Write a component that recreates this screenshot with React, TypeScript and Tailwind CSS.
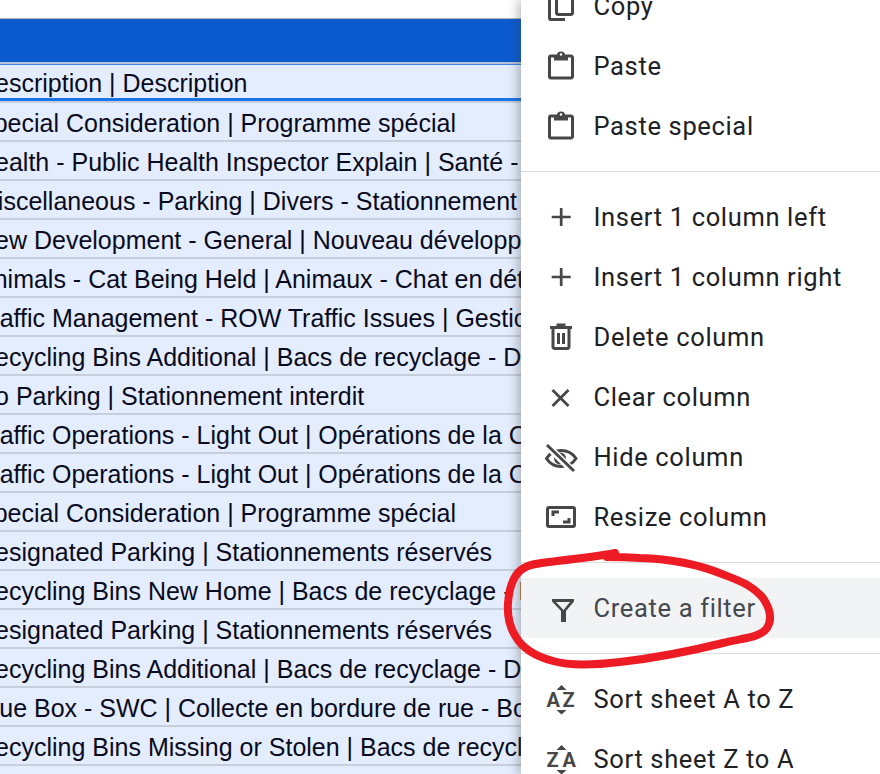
import React from 'react';

const ROWS = [
  'Special Consideration | Programme spécial',
  'Health - Public Health Inspector Explain | Santé - Inspecteur de la santé',
  'Miscellaneous - Parking | Divers - Stationnement illégal',
  'New Development - General | Nouveau développement',
  'Animals - Cat Being Held | Animaux - Chat en détention',
  'Traffic Management - ROW Traffic Issues | Gestion de la circulation',
  'Recycling Bins Additional | Bacs de recyclage - Demande',
  'No Parking | Stationnement interdit',
  'Traffic Operations - Light Out | Opérations de la Circulation',
  'Traffic Operations - Light Out | Opérations de la Circulation',
  'Special Consideration | Programme spécial',
  'Designated Parking | Stationnements réservés',
  'Recycling Bins New Home | Bacs de recyclage - Nouveau',
  'Designated Parking | Stationnements réservés',
  'Recycling Bins Additional | Bacs de recyclage - Demande',
  'Blue Box - SWC | Collecte en bordure de rue - Boîte bleue',
  'Recycling Bins Missing or Stolen | Bacs de recyclage manquants',
  '',
];

const Svg = ({ children }: { children: React.ReactNode }) => (
  <svg width="36" height="36" viewBox="0 0 36 36" fill="none" stroke="#474747" strokeWidth="3">
    {children}
  </svg>
);

const CopyIcon = () => (
  <Svg>
    <path d="M15 3h13a1.500 1.500 0 0 1 1.500 1.500V25a1.500 1.500 0 0 1-1.500 1.500H15a1.500 1.500 0 0 1-1.500-1.500V4.500A1.500 1.500 0 0 1 15 3Z" />
    <path d="M6.500 8v22a1.500 1.500 0 0 0 1.500 1.500h14" />
  </Svg>
);

const PasteIcon = () => (
  <Svg>
    <path d="M8 8h20a1.500 1.500 0 0 1 1.500 1.500v19A1.500 1.500 0 0 1 28 30H8a1.500 1.500 0 0 1-1.500-1.500v-19A1.500 1.500 0 0 1 8 8Z" />
    <path d="M11 7h14v5.500H11z" fill="#474747" stroke="none" />
    <path d="M14 7a4 3.500 0 0 1 8 0z" fill="#474747" stroke="none" />
    <circle cx="18" cy="6.500" r="1.200" fill="#fff" stroke="none" />
  </Svg>
);

const PlusIcon = () => (
  <Svg>
    <path d="M18.200 9v18M8.700 18h19" strokeWidth="2.700" />
  </Svg>
);

const TrashIcon = () => (
  <Svg>
    <path d="M10 9v19a1.500 1.500 0 0 0 1.500 1.500h13A1.500 1.500 0 0 0 26 28V9" />
    <path d="M7 8.500h22M13.500 6h9" />
    <path d="M15.500 14v11M20.500 14v11" />
  </Svg>
);

const CloseIcon = () => (
  <Svg>
    <path d="M9.500 11l16 16M25.500 11l-16 16" strokeWidth="2.800" />
  </Svg>
);

const EyeOffIcon = () => (
  <Svg>
    <path d="M3.500 19.500C7 14 12 11.500 18 11.500s11.500 2.500 15 8c-3.500 5.500-9 8-15 8s-11-2.500-14.500-8Z" />
    <circle cx="17" cy="19.500" r="6" fill="#474747" stroke="none" />
    <path d="M4.500 7l26 25.500" stroke="#fff" strokeWidth="7" />
    <path d="M4 6l27 26" />
  </Svg>
);

const ResizeIcon = () => (
  <Svg>
    <rect x="4.500" y="8.500" width="27" height="19" rx="1.500" />
    <path d="M10 17v-4h6M26 19v4h-6" />
  </Svg>
);

const FilterIcon = () => (
  <svg width="36" height="36" viewBox="0 0 36 36" fill="#474747">
    <path
      fillRule="evenodd"
      d="M9 9h22v2.500L23 21v11h-5V21L9 11.500V9Zm4 3l7.500 8 6.500-8H13Z"
    />
  </svg>
);

const SortIcon = ({ first, second }: { first: string; second: string }) => (
  <svg width="36" height="36" viewBox="0 0 36 36" fill="#474747">
    <path d="M18.500 4l5 5h-10zM18.500 33.500l-5-4.500h10z" />
    <text x="3.500" y="26" fontFamily="Roboto, sans-serif" fontWeight="700" fontSize="20">{first}</text>
    <text x="19.500" y="26" fontFamily="Roboto, sans-serif" fontWeight="700" fontSize="20">{second}</text>
  </svg>
);

const MenuItem = ({ icon, label, active }: { icon: React.ReactNode; label: string; active?: boolean }) => (
  <div className={`flex h-[60px] items-center pl-[22px] ${active ? 'bg-[#f1f3f4]' : ''}`}>
    <div className="flex h-9 w-9 shrink-0 items-center justify-center">{icon}</div>
    <span className={`ml-[14.500px] whitespace-nowrap text-[25.500px] tracking-[0.65px] ${active ? 'text-[#45484d]' : 'text-[#202124]'}`}>
      {label}
    </span>
  </div>
);

const Divider = () => <div className="my-[15px] h-px bg-[#dadce0]" />;

export default function App() {
  return (
    <div className="relative flex h-[774px] w-[880px] overflow-hidden bg-white font-['Roboto',sans-serif]">
      {/* Sheet behind the menu */}
      <div className="w-[521px] shrink-0 overflow-hidden font-['Liberation_Sans',Arial,sans-serif] text-[25px] text-[#0a0a1e]">
        <div className="h-[19px] border-b border-[#b8b8b8]" />
        <div className="h-[43px] bg-[#0b5bcf]" />
        <div className="h-[2px] bg-[#b9c4d6]" />
        <div className="flex h-[37px] items-center border-t border-[#3f86e4] border-b-[3px] border-b-[#1a73e8] bg-[#e3edfd] pt-[4px]">
          <span className="-ml-[23px] whitespace-nowrap">Description | Description</span>
        </div>
        {ROWS.map((row, i) => (
          <div key={i} className="flex h-[39px] items-center border-t-2 border-[#c6cedb] bg-[#e3edfd] pt-[4px]">
            <span className="-ml-[23px] whitespace-nowrap">{row}</span>
          </div>
        ))}
      </div>

      {/* Context menu */}
      <div className="relative flex-1 bg-white shadow-[-3px_0_10px_rgba(60,64,67,0.35)]">
        <div className="-mt-6">
          <MenuItem icon={<CopyIcon />} label="Copy" />
          <MenuItem icon={<PasteIcon />} label="Paste" />
          <MenuItem icon={<PasteIcon />} label="Paste special" />
          <Divider />
          <MenuItem icon={<PlusIcon />} label="Insert 1 column left" />
          <MenuItem icon={<PlusIcon />} label="Insert 1 column right" />
          <MenuItem icon={<TrashIcon />} label="Delete column" />
          <MenuItem icon={<CloseIcon />} label="Clear column" />
          <MenuItem icon={<EyeOffIcon />} label="Hide column" />
          <MenuItem icon={<ResizeIcon />} label="Resize column" />
          <Divider />
          <MenuItem icon={<FilterIcon />} label="Create a filter" active />
          <Divider />
          <MenuItem icon={<SortIcon first="A" second="Z" />} label="Sort sheet A to Z" />
          <MenuItem icon={<SortIcon first="Z" second="A" />} label="Sort sheet Z to A" />
        </div>
      </div>

      {/* Red hand-drawn annotation */}
      <svg className="pointer-events-none absolute left-0 top-0" width="880" height="774" fill="none">
        <path
          d="M615 553C600 556 575 559 557 561C540 563 528 564 521 570C512 577 509 590 508 603C507 617 510 628 516 637C523 649 538 657 553 661C570 666 595 665 620 662C655 658 695 650 723 643C745 638 761 637 767 628C772 620 771 610 763 598C752 585 740 581 722 574C700 565 670 559 640 558C625 557 615 557 607 557"
          stroke="#ed1c24"
          strokeWidth="8"
          strokeLinecap="round"
          strokeLinejoin="round"
        />
      </svg>
    </div>
  );
}
